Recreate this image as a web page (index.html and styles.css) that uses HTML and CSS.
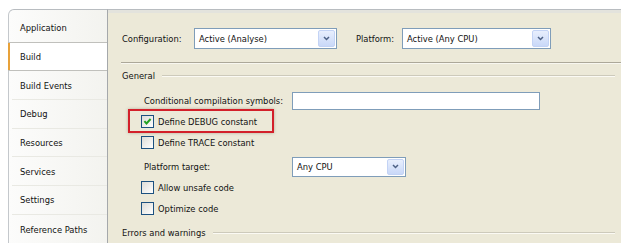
FILE: index.html
```html
<!DOCTYPE html>
<html>
<head>
<meta charset="utf-8">
<link rel="stylesheet" href="styles.css">
</head>
<body>
<div class="window">
  <nav class="tabs">
    <div class="tab first">Application</div>
    <div class="tab active">Build</div>
    <div class="tab">Build Events</div>
    <div class="tab">Debug</div>
    <div class="tab">Resources</div>
    <div class="tab">Services</div>
    <div class="tab">Settings</div>
    <div class="tab last">Reference Paths</div>
  </nav>
  <main class="panel">
    <div class="config-row">
      <span class="lbl-config">Configuration:</span>
      <div class="combo w-config">
        <span class="combo-text">Active (Analyse)</span>
        <span class="combo-btn"><svg width="7" height="5" viewBox="0 0 7 5"><path d="M1 1 L3.5 3.5 L6 1" fill="none" stroke="#4d6185" stroke-width="1.5"/></svg></span>
      </div>
      <span class="lbl-platform">Platform:</span>
      <div class="combo w-platform">
        <span class="combo-text">Active (Any CPU)</span>
        <span class="combo-btn"><svg width="7" height="5" viewBox="0 0 7 5"><path d="M1 1 L3.5 3.5 L6 1" fill="none" stroke="#4d6185" stroke-width="1.5"/></svg></span>
      </div>
    </div>
    <div class="sep"></div>

    <div class="group-head"><span>General</span><span class="rule"></span></div>

    <div class="row field-row gap-top">
      <span class="field-label">Conditional compilation symbols:</span>
      <div class="textbox"></div>
    </div>
    <div class="row check-row debug-row">
      <span class="checkbox"><svg width="11" height="11" viewBox="0 0 11 11"><path d="M2.4 5.2 L4.5 7.5 L8.6 3" fill="none" stroke="#21a121" stroke-width="1.9"/></svg></span>
      <span>Define DEBUG constant</span>
      <span class="highlight"></span>
    </div>
    <div class="row check-row">
      <span class="checkbox"></span>
      <span>Define TRACE constant</span>
    </div>
    <div class="row field-row gap-top-sm">
      <span class="field-label">Platform target:</span>
      <div class="combo w-target">
        <span class="combo-text">Any CPU</span>
        <span class="combo-btn"><svg width="7" height="5" viewBox="0 0 7 5"><path d="M1 1 L3.5 3.5 L6 1" fill="none" stroke="#4d6185" stroke-width="1.5"/></svg></span>
      </div>
    </div>
    <div class="row check-row">
      <span class="checkbox"></span>
      <span>Allow unsafe code</span>
    </div>
    <div class="row check-row">
      <span class="checkbox"></span>
      <span>Optimize code</span>
    </div>

    <div class="group-head gap-top-sm"><span>Errors and warnings</span><span class="rule"></span></div>
  </main>
</div>
</body>
</html>
```
FILE: styles.css
```css
html, body {
  margin: 0;
  padding: 0;
  background: #ffffff;
}
body {
  width: 621px;
  height: 243px;
  overflow: hidden;
  font-family: "DejaVu Sans Condensed", "DejaVu Sans", sans-serif;
  font-stretch: condensed;
  font-size: 9.3px;
  color: #111;
}
.window {
  display: flex;
  padding-top: 9px;
  padding-left: 8px;
  height: 234px;
}
.tabs {
  width: 98px;
  flex: none;
  border-left: 1px solid #c4c8cc;
  border-top: 1px solid #b8bcc0;
  border-top-left-radius: 6px;
  padding-top: 4px;
  background: linear-gradient(to right, #fcfcfb, #f3f3ef);
}
.tab {
  height: 28.7px;
  box-sizing: border-box;
  display: flex;
  align-items: center;
  padding-left: 8px;
  margin-left: 3px;
  border-bottom: 1px solid #e9e9e3;
}
.tab.active {
  background: #ffffff;
  margin-left: -1px;
  padding-left: 12px;
  border-top: 1px solid #c0c0bc;
  border-bottom: 1px solid #c0c0bc;
  margin-top: -1px;
  height: 29.7px;
  box-shadow: inset 2px 0 0 #e8a23a;
}
.tab.last { border-bottom: none; }

.panel {
  flex: 1;
  background: #ece9d8;
  border-left: 1px solid #a5a8ab;
  border-top: 1px solid #b8bcc0;
  box-shadow: inset 0 3px 0 #e3e3dd;
  padding-left: 14px;
  display: flex;
  flex-direction: column;
}
.config-row {
  margin-top: 18px;
  height: 21px;
  display: flex;
  align-items: center;
}
.lbl-config { width: 72px; }
.lbl-platform { width: 46px; margin-left: 19px; }

.combo {
  box-sizing: border-box;
  height: 21px;
  background: #fff;
  border: 1px solid #7f9db9;
  display: flex;
  align-items: center;
  justify-content: space-between;
  padding: 1px;
}
.w-config { width: 143px; }
.w-platform { width: 149px; }
.w-target { width: 114px; height: 20px; }
.combo-text { padding-left: 3px; }
.combo-btn {
  box-sizing: border-box;
  width: 17px;
  height: 100%;
  border: 1px solid #c3d3f5;
  border-radius: 2px;
  background: linear-gradient(#e8effd, #c9d8f8);
  display: flex;
  align-items: center;
  justify-content: center;
}
.combo-btn svg { display: block; }

.sep {
  margin-top: 13px;
  margin-left: -1px;
  height: 0;
  border-top: 1px solid #aca899;
  border-bottom: 1px solid #f8f7f0;
}
.group-head {
  margin-top: 1px;
  height: 21px;
  display: flex;
  align-items: center;
}
.group-head .rule {
  flex: 1;
  margin-left: 7px;
  margin-right: 6px;
  height: 0;
  border-top: 1px solid #cdcabb;
  border-bottom: 1px solid #fbfaf4;
}
.gap-top { margin-top: 4px; }
.gap-top-sm { margin-top: 3px; }

.row {
  height: 21px;
  display: flex;
  align-items: center;
}
.field-row { padding-left: 22px; }
.field-label { width: 148px; }
.textbox {
  box-sizing: border-box;
  width: 248px;
  height: 18px;
  background: #fff;
  border: 1px solid #7f9db9;
}
.check-row { padding-left: 19px; gap: 4px; }
.checkbox {
  box-sizing: border-box;
  width: 13px;
  height: 13px;
  border: 1px solid #1c5180;
  background: linear-gradient(135deg, #dcdcd7, #ffffff);
  display: flex;
  align-items: center;
  justify-content: center;
  flex: none;
}
.checkbox svg { display: block; }
.debug-row { position: relative; }
.highlight {
  position: absolute;
  left: 6px;
  top: -2px;
  width: 146px;
  height: 24px;
  box-sizing: border-box;
  border: 2px solid #d3202a;
  box-shadow: 0 0 3px rgba(80, 60, 40, 0.35);
}
```
